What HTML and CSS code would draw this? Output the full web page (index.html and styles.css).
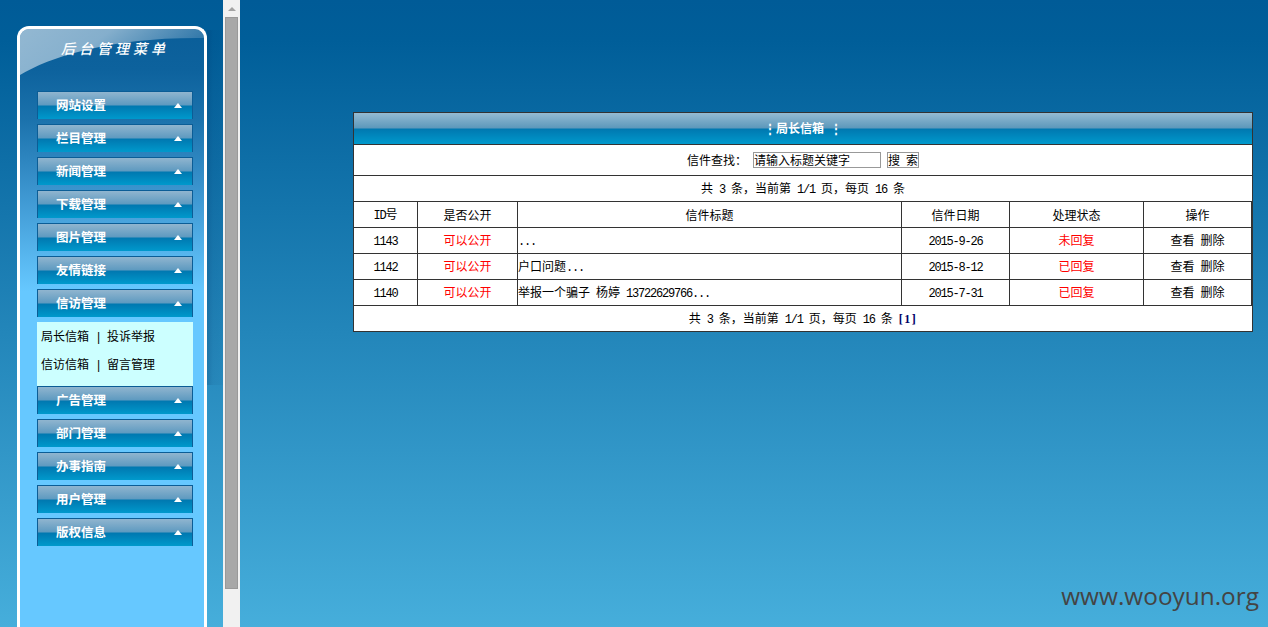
FILE: index.html
```html
<!DOCTYPE html>
<html lang="zh">
<head>
<meta charset="utf-8">
<title>局长信箱</title>
<link rel="stylesheet" href="styles.css">
</head>
<body>
<div class="page">
  <aside class="left-frame">
    <div class="panel">
      <svg class="gloss" viewBox="0 0 184 50" width="184" height="50" aria-hidden="true">
        <defs>
          <linearGradient id="glossFill" x1="0" y1="0" x2="1" y2="0.35">
            <stop offset="0" stop-color="#fff" stop-opacity="0.56"/>
            <stop offset="0.45" stop-color="#fff" stop-opacity="0.5"/>
            <stop offset="1" stop-color="#fff" stop-opacity="0.12"/>
          </linearGradient>
        </defs>
        <path d="M0 46C30 28 90 8 184 9L184 0L0 0Z" fill="url(#glossFill)"/>
      </svg>
      <h1 class="panel-title">后台管理菜单</h1>
      <nav class="menu">
        <div class="menu-item"><span>网站设置</span><i class="tri"></i></div>
        <div class="menu-item"><span>栏目管理</span><i class="tri"></i></div>
        <div class="menu-item"><span>新闻管理</span><i class="tri"></i></div>
        <div class="menu-item"><span>下载管理</span><i class="tri"></i></div>
        <div class="menu-item"><span>图片管理</span><i class="tri"></i></div>
        <div class="menu-item"><span>友情链接</span><i class="tri"></i></div>
        <div class="menu-item"><span>信访管理</span><i class="tri"></i></div>
        <div class="submenu">
          <div class="sub-row">局长信箱<span class="l"> | </span>投诉举报</div>
          <div class="sub-row">信访信箱<span class="l"> | </span>留言管理</div>
        </div>
        <div class="menu-item"><span>广告管理</span><i class="tri"></i></div>
        <div class="menu-item"><span>部门管理</span><i class="tri"></i></div>
        <div class="menu-item"><span>办事指南</span><i class="tri"></i></div>
        <div class="menu-item"><span>用户管理</span><i class="tri"></i></div>
        <div class="menu-item"><span>版权信息</span><i class="tri"></i></div>
      </nav>
    </div>
    <div class="panel-shade"></div>
  </aside>
  <div class="scrollbar">
    <div class="scroll-btn"><i class="scroll-tri"></i></div>
    <div class="scroll-thumb"></div>
  </div>
  <main class="right-frame">
    <section class="box">
      <header class="box-title">⋮局长信箱<span class="l"> </span>⋮</header>
      <div class="search-row"><span class="search-label">信件查找：</span><span class="fake-input">请输入标题关键字</span><span class="fake-btn">搜<span class="l"> </span>索</span></div>
      <div class="count-row">共<span class="l"> 3 </span>条，当前第<span class="l"> 1/1 </span>页，每页<span class="l"> 16 </span>条</div>
      <table class="letters">
        <colgroup>
          <col class="c-id"><col class="c-pub"><col class="c-title"><col class="c-date"><col class="c-state"><col class="c-op">
        </colgroup>
        <thead>
          <tr><th><span class="l">ID</span>号</th><th>是否公开</th><th>信件标题</th><th>信件日期</th><th>处理状态</th><th>操作</th></tr>
        </thead>
        <tbody>
          <tr>
            <td><span class="l">1143</span></td><td class="red">可以公开</td>
            <td class="subject"><span class="l">...</span></td>
            <td><span class="l">2015-9-26</span></td><td class="red">未回复</td>
            <td>查看<span class="l"> </span>删除</td>
          </tr>
          <tr>
            <td><span class="l">1142</span></td><td class="red">可以公开</td>
            <td class="subject">户口问题<span class="l">...</span></td>
            <td><span class="l">2015-8-12</span></td><td class="red">已回复</td>
            <td>查看<span class="l"> </span>删除</td>
          </tr>
          <tr>
            <td><span class="l">1140</span></td><td class="red">可以公开</td>
            <td class="subject">举报一个骗子<span class="l"> </span>杨婷<span class="l"> 13722629766...</span></td>
            <td><span class="l">2015-7-31</span></td><td class="red">已回复</td>
            <td>查看<span class="l"> </span>删除</td>
          </tr>
        </tbody>
      </table>
      <div class="foot-row">共<span class="l"> 3 </span>条，当前第<span class="l"> 1/1 </span>页，每页<span class="l"> 16 </span>条<span class="l"> </span><b class="pager">[1]</b></div>
    </section>
  </main>
</div>
<div class="watermark">www.wooyun.org</div>
</body>
</html>
```

FILE: styles.css
```css
* { box-sizing: border-box; }
html, body { height: 100%; }
body {
  margin: 0;
  overflow: hidden;
  color: #000;
  font: 12px/14px "Noto Sans CJK SC", "Liberation Sans", sans-serif;
  background: linear-gradient(#005b97 0, #005e99 40px, #46aedb 100%);
}
.page { display: flex; height: 627px; overflow: hidden; position: relative; }
.l {
  font-family: "Liberation Mono", monospace;
  font-size: 12px;
  letter-spacing: -1.2px;
  line-height: 1;
  white-space: pre;
}

/* left frame */
.left-frame {
  width: 223px;
  flex: none;
  padding: 26px 16px 0 17px;
  display: flex;
  position: relative;
}
.panel {
  width: 190px;
  position: relative;
  overflow: hidden;
  border: 3px solid #fff;
  border-bottom: 0;
  border-radius: 12px 12px 0 0;
  padding-top: 62px;
  background: linear-gradient(#0a5e99 0, #0d629d 40px, #1b72ac 90px, #3d96d0 165px, #66c8ff 262px);
}
.panel-shade {
  position: absolute;
  left: 207px;
  top: 30px;
  width: 16px;
  height: 355px;
  background: linear-gradient(90deg, rgba(0, 40, 90, .2), rgba(0, 40, 90, .07) 6px, rgba(0, 40, 90, .04));
}
.gloss { position: absolute; left: 0; top: 0; display: block; }
.panel-title {
  position: absolute;
  left: 41px;
  top: 10px;
  margin: 0;
  color: #fff;
  font-size: 14px;
  font-weight: 500;
  font-style: italic;
  letter-spacing: 4px;
  line-height: 18px;
  white-space: nowrap;
}
.menu { margin-left: 17px; width: 156px; display: flex; flex-direction: column; }
.menu-item {
  height: 28px;
  margin-bottom: 5px;
  padding: 0 10px 2px 18px;
  display: flex;
  align-items: center;
  justify-content: space-between;
  color: #fff;
  font-weight: 700;
  font-size: 12.5px;
  border-top: 1px solid #0b5d96;
  border-left: 1px solid #0b5d96;
  border-right: 1px solid #0b5d96;
  background: linear-gradient(#90b5cf 0, #5e9ac0 13px, #0078b0 14px, #0099cc 100%);
}
.tri {
  width: 0;
  height: 0;
  margin-top: 1px;
  border-left: 4px solid transparent;
  border-right: 4px solid transparent;
  border-bottom: 5px solid #fff;
}
.submenu {
  height: 64px;
  padding: 0 4px;
  background: #ccffff;
}
.sub-row { height: 28px; line-height: 28px; white-space: pre; }

/* scrollbar */
.scrollbar { width: 17px; flex: none; background: #f1f1f1; }
.scroll-btn { height: 17px; display: flex; align-items: center; justify-content: center; }
.scroll-tri {
  width: 0;
  height: 0;
  border-left: 4px solid transparent;
  border-right: 4px solid transparent;
  border-bottom: 4px solid #a3a3a3;
}
.scroll-thumb {
  width: 13px;
  height: 572px;
  margin-left: 2px;
  background: #a8a8a8;
  border: 1px solid #999;
}

/* right frame */
.right-frame { flex: 1; padding: 112px 15px 0 113px; }
.box {
  width: 900px;
  border: 1px solid #333;
  background: #fff;
  text-align: center;
}
.box-title {
  height: 32px;
  border-bottom: 1px solid #333;
  color: #fff;
  font-weight: 700;
  line-height: 29px;
  background: linear-gradient(#94bbd3 0, #5c98bb 15px, #0078b0 16px, #0099cc 100%);
}
.search-row {
  height: 31px;
  border-bottom: 1px solid #333;
  padding-top: 7px;
  display: flex;
  justify-content: center;
  align-items: flex-start;
  gap: 6px;
}
.search-label { line-height: 16px; }
.fake-input {
  width: 128px;
  height: 16px;
  border: 1px solid #999;
  text-align: left;
}
.fake-btn {
  width: 32px;
  height: 16px;
  border: 1px solid #999;
  white-space: pre;
}
.count-row, .foot-row { padding-top: 5px; white-space: pre; }
.count-row { height: 26px; border-bottom: 1px solid #333; }
.foot-row { height: 25px; }
.pager {
  font: 700 12px/1 "Liberation Serif", serif;
  letter-spacing: 1.5px;
  color: #000066;
}
.letters {
  width: 898px;
  table-layout: fixed;
  border-collapse: separate;
  border-spacing: 0;
}
.c-id { width: 64px; }
.c-pub { width: 100px; }
.c-title { width: 384px; }
.c-date { width: 108px; }
.c-state { width: 134px; }
.c-op { width: 108px; }
.letters th, .letters td {
  height: 26px;
  padding: 0;
  border-right: 1px solid #333;
  border-bottom: 1px solid #333;
  font-weight: 400;
  text-align: center;
  vertical-align: middle;
  white-space: pre;
}
.letters td.subject { text-align: left; }
.letters td.red { color: #f00; padding-bottom: 1px; }

.watermark {
  position: absolute;
  right: 9px;
  bottom: 15px;
  color: #444;
  font: 24.4px/32px "Open Sans", sans-serif;
}
```
